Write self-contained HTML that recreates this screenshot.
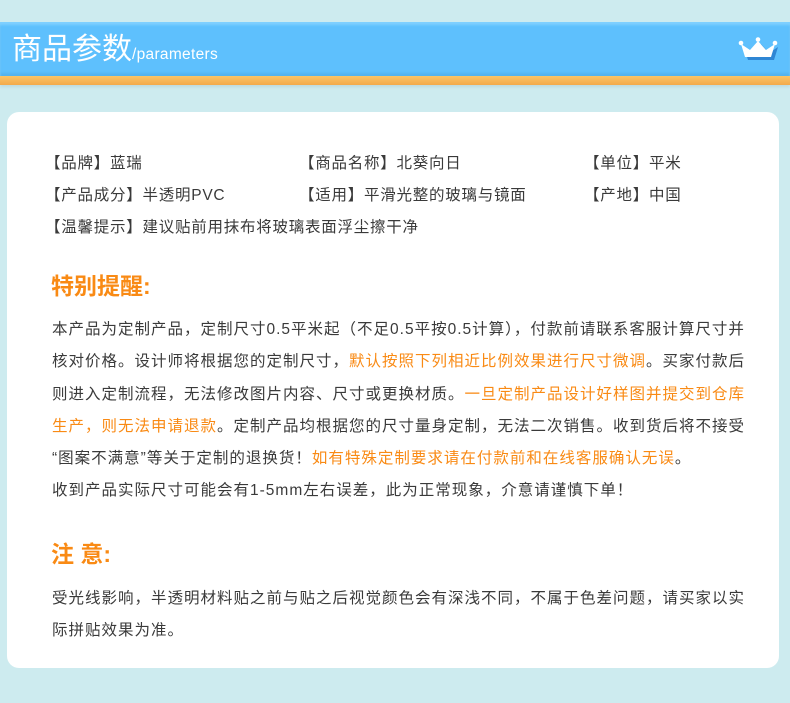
<!DOCTYPE html>
<html><head><meta charset="utf-8">
<style>
body{margin:0;width:790px;height:703px;background:#cdebef;font-family:"Liberation Sans","Noto Sans CJK SC",sans-serif;position:relative;overflow:hidden;color:#3a3a3a}
.bar{position:absolute;left:0;top:22px;width:790px;height:54px;background:#5ec0fd;box-shadow:inset 0 3px 2px #7fd0ff,inset 0 -3px 2px #55b4ef}
.or{position:absolute;left:0;top:76px;width:790px;height:9px;background:linear-gradient(#fcc567,#f3a94a);box-shadow:0 2px 3px rgba(0,0,0,.08)}
.t{position:absolute;left:12px;top:30px;color:#fff;font-size:30px;line-height:40px;white-space:nowrap}
.t small{font-size:15.5px;letter-spacing:0.3px}
.card{position:absolute;left:7px;top:112px;width:772px;height:556px;background:#fff;border-radius:12px}
.p{position:absolute;font-size:15.5px;white-space:nowrap;line-height:20px;letter-spacing:0.75px}
.h{position:absolute;left:51px;color:#f98a14;font-weight:bold;font-size:23px;white-space:nowrap}
.para{position:absolute;left:52px;font-size:15.5px;line-height:32.3px;letter-spacing:1.0px;white-space:nowrap}
.o{color:#f98a14}
</style></head><body>
<div class="bar"></div><div class="or"></div>
<div class="t">商品参数<small>/parameters</small></div>
<svg style="position:absolute;left:738px;top:36px" width="42" height="28" viewBox="0 0 42 28">
<path d="M6 11 L10 24 H36 L40 11 L31 17 L23 8 L15 17 Z" fill="#2f86d4"/>
<g fill="#fff">
<path d="M3 8 L7 21 H33 L37 8 L28 14 L20 5 L12 14 Z"/>
<circle cx="3" cy="7" r="2.3"/><circle cx="37" cy="7" r="2.3"/><circle cx="20" cy="3.5" r="2.3"/>
</g>
</svg>
<div class="card"></div>
<div class="p" style="left:45px;top:154px">【品牌】蓝瑞</div>
<div class="p" style="left:299px;top:154px">【商品名称】北葵向日</div>
<div class="p" style="left:584px;top:154px">【单位】平米</div>
<div class="p" style="left:45px;top:186px">【产品成分】半透明PVC</div>
<div class="p" style="left:299px;top:186px">【适用】平滑光整的玻璃与镜面</div>
<div class="p" style="left:584px;top:186px">【产地】中国</div>
<div class="p" style="left:45px;top:218px">【温馨提示】建议贴前用抹布将玻璃表面浮尘擦干净</div>
<div class="h" style="top:267px">特别提醒:</div>
<div class="para" style="top:314px">本产品为定制产品，定制尺寸0.5平米起（不足0.5平按0.5计算），付款前请联系客服计算尺寸并<br>核对价格。设计师将根据您的定制尺寸，<span class="o">默认按照下列相近比例效果进行尺寸微调</span>。买家付款后<br>则进入定制流程，无法修改图片内容、尺寸或更换材质。<span class="o">一旦定制产品设计好样图并提交到仓库</span><br><span class="o">生产，则无法申请退款</span>。定制产品均根据您的尺寸量身定制，无法二次销售。收到货后将不接受<br>“图案不满意”等关于定制的退换货！<span class="o">如有特殊定制要求请在付款前和在线客服确认无误</span>。<br>收到产品实际尺寸可能会有1-5mm左右误差，此为正常现象，介意请谨慎下单！</div>
<div class="h" style="top:535px">注 意:</div>
<div class="para" style="top:583px">受光线影响，半透明材料贴之前与贴之后视觉颜色会有深浅不同，不属于色差问题，请买家以实<br>际拼贴效果为准。</div>
</body></html>
